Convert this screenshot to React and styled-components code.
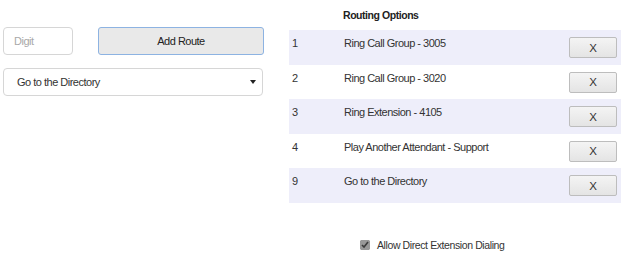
import React from "react";
import styled, { createGlobalStyle } from "styled-components";

const Global = createGlobalStyle`
  body {
    margin: 0;
    background: #fff;
    font-family: "Liberation Sans", Arial, sans-serif;
    color: #333;
  }
`;

const Page = styled.div`
  display: flex;
  width: 631px;
  height: 275px;
  font-size: 11px;
  letter-spacing: -0.5px;
`;

const Left = styled.div`
  width: 289px;
  padding: 27px 0 0 3px;
  box-sizing: border-box;
  display: flex;
  flex-direction: column;
  gap: 13px;
`;

const TopRow = styled.div`
  display: flex;
  gap: 25px;
`;

const DigitInput = styled.input`
  width: 70px;
  height: 28px;
  box-sizing: border-box;
  border: 1px solid #d6d6d6;
  border-radius: 4px;
  padding: 0 10px;
  font: 11px "Liberation Sans", Arial, sans-serif;
  letter-spacing: -0.5px;
  color: #333;
  &::placeholder {
    color: #a8a8a8;
  }
`;

const AddButton = styled.button`
  width: 166px;
  height: 28px;
  box-sizing: border-box;
  border: 1px solid #8db3e2;
  border-radius: 3px;
  background: #e9e9e9;
  font: 11px "Liberation Sans", Arial, sans-serif;
  letter-spacing: -0.5px;
  color: #222;
`;

const Select = styled.div`
  width: 260px;
  height: 28px;
  box-sizing: border-box;
  border: 1px solid #d6d6d6;
  border-radius: 4px;
  display: flex;
  align-items: center;
  justify-content: space-between;
  padding: 0 6px 0 13px;
  color: #333;
  &::after {
    content: "";
    border-left: 3px solid transparent;
    border-right: 3px solid transparent;
    border-top: 4px solid #222;
  }
`;

const Right = styled.div`
  width: 332px;
  display: flex;
  flex-direction: column;
`;

const Heading = styled.div`
  height: 30px;
  padding: 0 0 1px 54px;
  display: flex;
  align-items: center;
  box-sizing: border-box;
  font-weight: bold;
  font-size: 10.5px;
  letter-spacing: -0.45px;
  color: #222;
`;

const Row = styled.div`
  height: 34.6px;
  display: flex;
  align-items: flex-start;
  background: ${(p) => (p.$shaded ? "#eeeefa" : "#fff")};
  color: #333;
`;

const Num = styled.div`
  width: 55px;
  padding: 7px 0 0 3px;
  box-sizing: border-box;
  line-height: 13px;
`;

const Name = styled.div`
  flex: 1;
  padding-top: 7px;
  line-height: 13px;
`;

const RemoveButton = styled.button`
  width: 48px;
  height: 21px;
  margin: 7px 4px 0 0;
  box-sizing: border-box;
  border: 1px solid #bdbdbd;
  border-radius: 2px;
  background: linear-gradient(#f4f4f4, #e4e4e4);
  font: 11.5px "Liberation Sans", Arial, sans-serif;
  color: #333;
  padding: 0;
`;

const CheckRow = styled.label`
  display: flex;
  align-items: center;
  gap: 7px;
  margin-top: 36px;
  padding-left: 71px;
  font-size: 10.5px;
  letter-spacing: -0.4px;
  color: #333;
  input {
    margin: 0;
    width: 10px;
    height: 10px;
    accent-color: #999;
  }
`;

const routes = [
  ["1", "Ring Call Group - 3005"],
  ["2", "Ring Call Group - 3020"],
  ["3", "Ring Extension - 4105"],
  ["4", "Play Another Attendant - Support"],
  ["9", "Go to the Directory"],
];

export default function App() {
  return (
    <>
      <Global />
      <Page>
        <Left>
          <TopRow>
            <DigitInput placeholder="Digit" />
            <AddButton>Add Route</AddButton>
          </TopRow>
          <Select>Go to the Directory</Select>
        </Left>
        <Right>
          <Heading>Routing Options</Heading>
          {routes.map(([n, name], i) => (
            <Row key={n} $shaded={i % 2 === 0}>
              <Num>{n}</Num>
              <Name>{name}</Name>
              <RemoveButton>X</RemoveButton>
            </Row>
          ))}
          <CheckRow>
            <input type="checkbox" defaultChecked />
            Allow Direct Extension Dialing
          </CheckRow>
        </Right>
      </Page>
    </>
  );
}
